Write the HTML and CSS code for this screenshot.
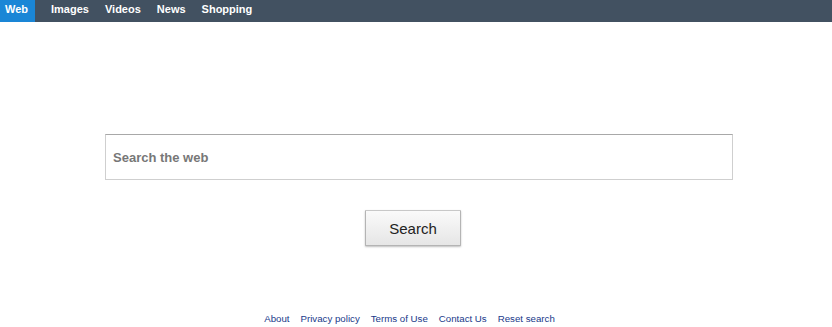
FILE: index.html
```html
<!DOCTYPE html>
<html lang="en">
<head>
    <meta charset="UTF-8">
    <meta name="viewport" content="width=device-width, initial-scale=1.0">
    <title>Search</title>
    <link rel="stylesheet" href="styles.css">
</head>
<body>

    <div class="topbar">
        <a href="#" class="tab active">Web</a>
        <a href="#" class="tab">Images</a>
        <a href="#" class="tab">Videos</a>
        <a href="#" class="tab">News</a>
        <a href="#" class="tab">Shopping</a>
    </div>

    <form class="search-form" onsubmit="return false;">
        <input type="text" class="search-input" placeholder="Search the web">
        <div class="actions">
            <button type="submit" class="search-btn">Search</button>
        </div>
    </form>

    <!-- footer links -->
    <div class="footer">
        <a href="#">About</a>
        <a href="#">Privacy policy</a>
        <a href="#">Terms of Use</a>
        <a href="#">Contact Us</a>
        <a href="#">Reset search</a>
    </div>

</body>
</html>
```

FILE: styles.css
```css
body {
    font-family: "Liberation Sans", Arial, sans-serif;
    background-color: #fff;
    margin: 0;
    padding: 0;
}

.topbar {
    display: flex;
    align-items: stretch;
    height: 22px;
    background-color: #425161;
}

.tab {
    display: flex;
    align-items: center;
    padding: 0 8px 4px;
    color: #fff;
    font-size: 11px;
    font-weight: bold;
    text-decoration: none;
}

.tab.active {
    background-color: #1a86d6;
    padding: 0 7px 4px 5px;
    margin-right: 8px;
}

.search-form {
    width: 628px;
    margin: 112px 0 0 105px;
}

.search-input {
    display: block;
    width: 100%;
    height: 46px;
    box-sizing: border-box;
    padding: 0 7px;
    border: 1px solid #cfcfcf;
    border-top-color: #a8a8a8;
    font-family: inherit;
    font-size: 13px;
    font-weight: bold;
    color: #333;
    outline: none;
}

.search-input::placeholder {
    color: #777;
}

.actions {
    margin-top: 30px;
    padding-left: 260px;
}

.search-btn {
    width: 96px;
    height: 36px;
    font-family: inherit;
    font-size: 15px;
    color: #222;
    background: linear-gradient(#fafafa, #e6e6e6);
    border: 1px solid #b4b4b4;
    border-top-color: #c8c8c8;
    border-radius: 1px;
    box-shadow: 0 1px 2px rgba(0, 0, 0, 0.25);
    cursor: pointer;
}

.footer {
    display: flex;
    justify-content: center;
    gap: 11px;
    margin-top: 67px;
    padding-right: 13px;
    font-size: 9.7px;
    line-height: 12px;
}

.footer a {
    color: #20398a;
    text-decoration: none;
}
```
